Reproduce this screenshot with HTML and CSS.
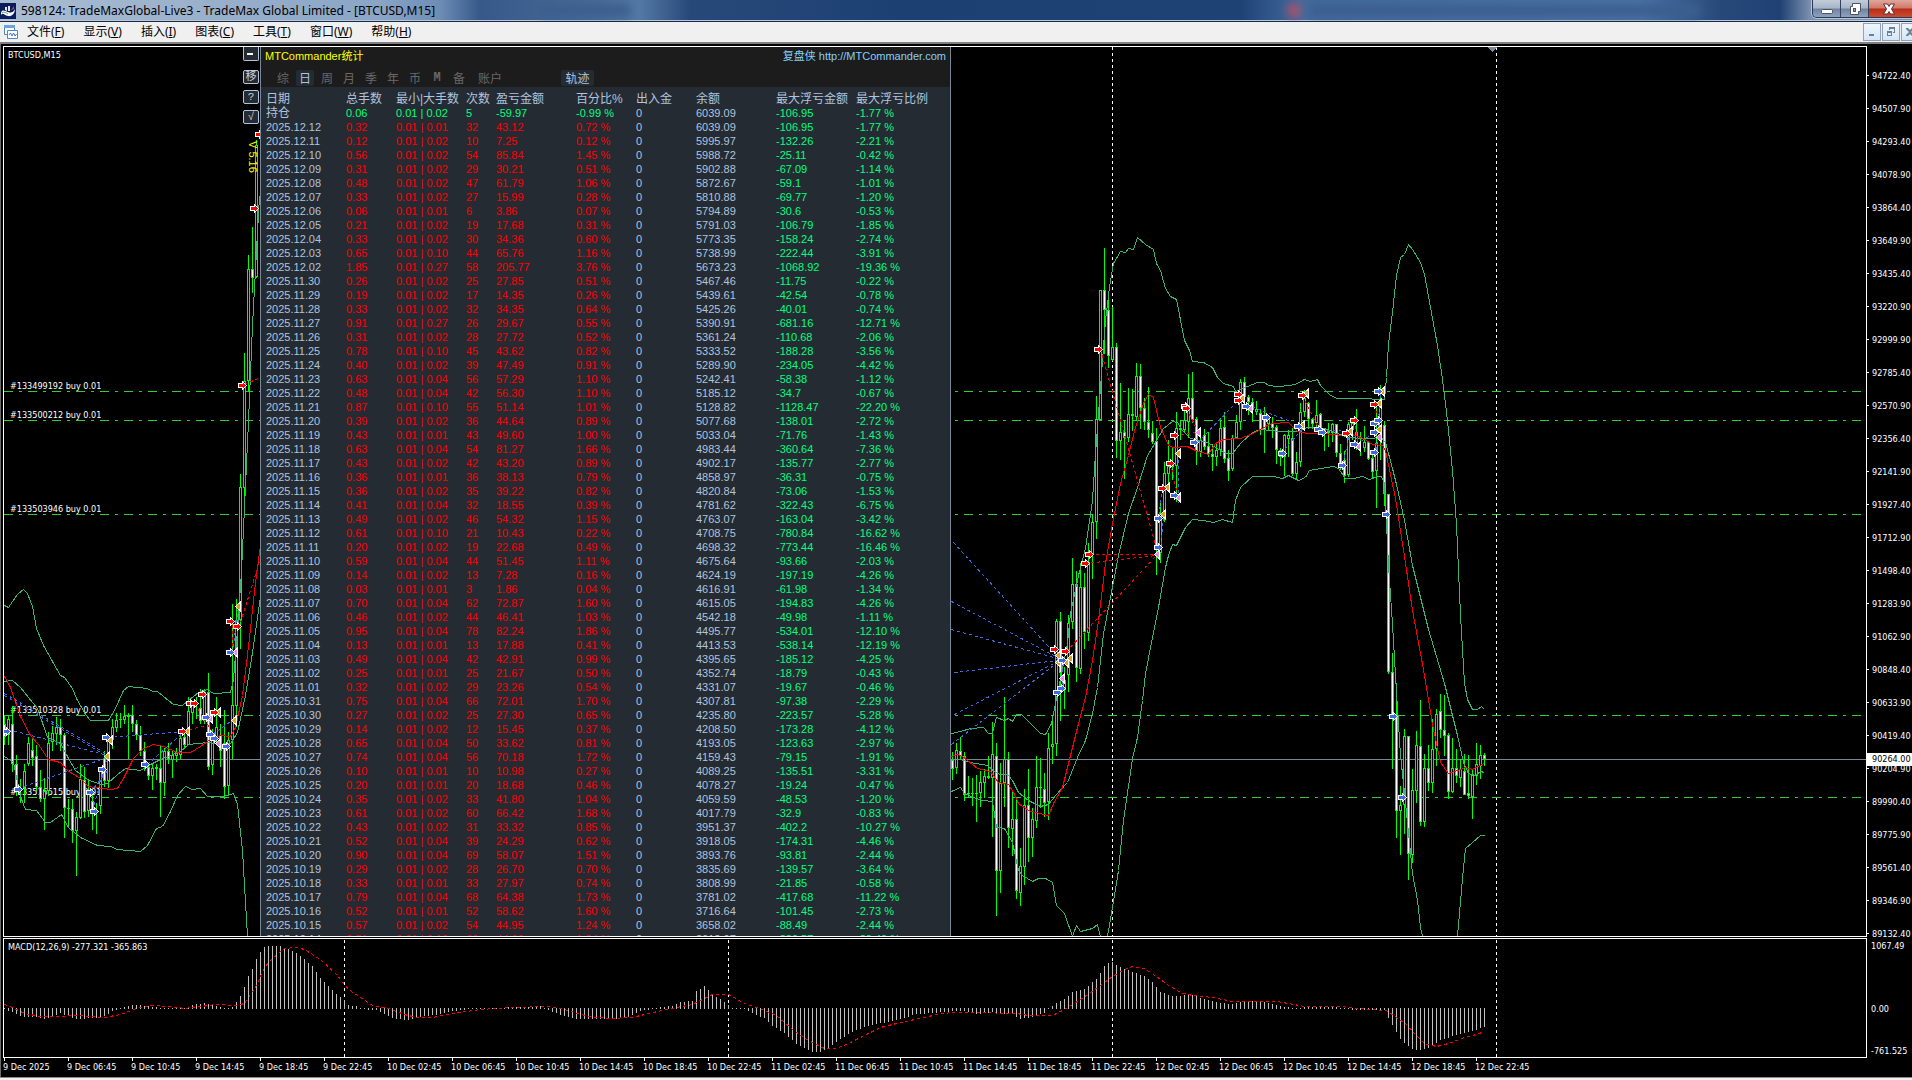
FILE: index.html
```html
<!DOCTYPE html>
<html lang="zh-CN">
<head>
<meta charset="utf-8">
<title>598124: TradeMaxGlobal-Live3 - TradeMax Global Limited - [BTCUSD,M15]</title>
<link rel="stylesheet" href="styles.css">
</head>
<body>
<div class="app">
  <header class="titlebar">
    <svg class="app-icon" width="16" height="16" viewBox="0 0 16 16" aria-hidden="true">
      <rect width="16" height="16" fill="#0b1c5c"/>
      <path d="M1 10C2 6 5 8 8 9S13 10 15 6C15 10 12 14 8 13S3 9 1 12z" fill="#fff"/>
      <path d="M5 7V4h2v4zM8 8V3h2v5z" fill="#dfe6f5"/>
      <path d="M11 7l3-4v3z" fill="#d33a3a"/>
      <path d="M2 10c2-2 4 0 6 1" stroke="#3fae5c" fill="none"/>
    </svg>
    <h1 class="title">598124: TradeMaxGlobal-Live3 - TradeMax Global Limited - [BTCUSD,M15]</h1>
    <div class="ghost ghost-left"></div>
    <div class="ghost ghost-right"></div>
    <div class="window-controls">
      <button class="wc" aria-label="最小化"><svg width="14" height="14" viewBox="0 0 14 14"><rect x="1.5" y="7.5" width="11" height="4" rx="1" fill="#fff" stroke="#4a5566"/></svg></button>
      <button class="wc" aria-label="还原"><svg width="14" height="14" viewBox="0 0 14 14"><path d="M4.500 1.500h8v8h-2v3h-8v-8h2z" fill="#fff" stroke="#4a5566"/><rect x="5.500" y="6.500" width="2" height="3" fill="#8b9bb0" stroke="#4a5566"/></svg></button>
      <button class="wc wc-close" aria-label="关闭"><svg width="14" height="14" viewBox="0 0 14 14"><path d="M1.500 2h4L7 4.500 8.500 2h4L9.500 7l3 5h-4L7 9.500 5.500 12h-4l3-5z" fill="#fff" stroke="#5a3038"/></svg></button>
    </div>
  </header>

  <nav class="menubar">
    <svg class="menu-icon" width="14" height="14" viewBox="0 0 14 14" aria-hidden="true">
      <path d="M.5.500h10v9H.5z" fill="#fff" stroke="#4d86c6"/><path d="M0 0h11v3H0z" fill="#6ba5dc"/>
      <path d="M3.500 5.500h10v8h-10z" fill="#fff" stroke="#4d86c6"/><path d="M5 10l1.500-2 1.500 3 1.500-3 1.500 3 1.500-2" stroke="#3d78bc" fill="none"/>
    </svg>
    <button class="menu">文件(<u>F</u>)</button>
    <button class="menu">显示(<u>V</u>)</button>
    <button class="menu">插入(<u>I</u>)</button>
    <button class="menu">图表(<u>C</u>)</button>
    <button class="menu">工具(<u>T</u>)</button>
    <button class="menu">窗口(<u>W</u>)</button>
    <button class="menu">帮助(<u>H</u>)</button>
    <div class="mdi-controls">
      <button class="mdi" aria-label="最小化图表"><svg width="10" height="10" viewBox="0 0 10 10"><path d="M2 7h5v2H2z"/></svg></button>
      <button class="mdi" aria-label="还原图表"><svg width="10" height="10" viewBox="0 0 10 10"><path d="M3 0h6v6H7V5h1V2H4v1H3zM1 4h5v5H1zM2 6v2h3V6z" fill-rule="evenodd"/></svg></button>
      <button class="mdi" aria-label="关闭图表"><svg width="10" height="10" viewBox="0 0 10 10"><path d="M1 1h2l2 2 2-2h2v1L6 5l3 3v1H7L5 7 3 9H1V8l3-3-3-3z"/></svg></button>
    </div>
  </nav>

  <main class="workspace">
    <section class="plot price-plot" aria-label="BTCUSD,M15">
      <svg class="canvas" id="price-canvas"><g id="price-layer" transform="translate(-4 -47)"></g></svg>
      <div class="plot-label">BTCUSD,M15</div>
      <div class="version">V 5.16</div>
      <div class="tools">
        <button class="tool tool-min" aria-label="收起"><span></span></button>
        <button class="tool">移</button>
        <button class="tool">?</button>
        <button class="tool">√</button>
      </div>
      <aside class="panel">
        <div class="panel-head">
          <div class="panel-title"><span>MTCommander统计</span><a href="http://MTCommander.com">复盘侠 http://MTCommander.com</a></div>
          <div class="tabs">
            <button class="tab">综</button><button class="tab on">日</button><button class="tab">周</button><button class="tab">月</button><button class="tab">季</button><button class="tab">年</button><button class="tab">币</button><button class="tab tab-m">M</button><button class="tab">备</button><button class="tab wide">账户</button><button class="tab on track">轨迹</button>
          </div>
        </div>
        <table class="stats">
          <colgroup><col class="w80"><col class="w50"><col class="w70"><col class="w30"><col class="w80"><col class="w60"><col class="w60"><col class="w80"><col class="w80"><col></colgroup>
          <thead><tr><th>日期</th><th>总手数</th><th>最小|大手数</th><th>次数</th><th>盈亏金额</th><th>百分比%</th><th>出入金</th><th>余额</th><th>最大浮亏金额</th><th>最大浮亏比例</th></tr></thead>
          <tbody id="stats-body"></tbody>
        </table>
      </aside>
    </section>
    <div class="axis price-axis">
      <ul class="prices" id="prices"></ul>
      <div class="price-tag">90264.00</div>
    </div>

    <section class="plot macd-plot" aria-label="MACD">
      <svg class="canvas"><g id="macd-layer" transform="translate(-4 -939)"></g></svg>
      <div class="plot-label">MACD(12,26,9) -277.321 -365.863</div>
    </section>
    <div class="axis macd-axis"><span>1067.49</span><span>0.00</span><span>-761.525</span></div>

    <ol class="times" id="times"></ol>
  </main>
</div>
<script src="chart.js"></script>
</body>
</html>
```
FILE: styles.css
```css
* { box-sizing: border-box; }
body { margin: 0; background: #000; color: #fff; font: 9px/12px "DejaVu Sans Condensed", "DejaVu Sans", sans-serif; }
button { border: 0; padding: 0; margin: 0; background: none; color: inherit; font: inherit; }
ul, ol { list-style: none; margin: 0; padding: 0; }

.app { display: flex; flex-direction: column; height: 100vh; overflow: hidden; border-bottom: 2px solid #f0f0f0; }

/* title bar */
.titlebar {
  position: relative; flex: none; display: flex; align-items: center; height: 22px; overflow: hidden;
  border-bottom: 1px solid #1b2a44; box-shadow: inset 0 -1px #b9c9dc;
  background: linear-gradient(90deg, #a9bcd2 0, #9db3cd 160px, #8aa5c6 380px, #6d8db5 440px, #36598a 480px, #4a6b98 600px, #5478a5 640px, #27497a 690px, #1d4072 900px, #1f4275 1240px, #426a9c 1300px, #4c73a4 1640px, #27497a 1720px, #1f4173 1780px, #7b8fae 1810px);
}
.app-icon { flex: none; }
.title { position: relative; z-index: 1; margin: 0 0 0 5px; color: #000; font: 12px/20px "Noto Sans", "Open Sans", sans-serif; white-space: nowrap; }
.ghost { position: absolute; top: 4px; height: 13px; filter: blur(4px); background: #3c5f8f; }
.ghost-left { left: 540px; width: 90px; }
.ghost-right { left: 1310px; width: 390px; }
.ghost-right::before { content: ""; display: block; width: 12px; height: 13px; margin-left: -22px; background: #b05068; }
.window-controls { position: relative; margin-left: auto; align-self: flex-start; display: flex; height: 18px; border: 1px solid #2b3950; border-top: 0; border-right: 0; border-radius: 0 0 0 5px; overflow: hidden; box-shadow: 0 0 0 1px #b7c5d8; }
.wc { display: grid; place-items: center; width: 28px; border-right: 1px solid #33435c; background: linear-gradient(#c3ccd9, #a7b4c6 48%, #6f83a0 52%, #8fa2bd); }
.wc-close { width: 43px; border-right: 0; padding-right: 4px; background: linear-gradient(#e0a79c, #d07868 48%, #b62d17 52%, #cc4a30); }

/* menu bar */
.menubar { flex: none; display: flex; align-items: center; height: 22px; padding-left: 4px; background: #f0f0f0; border-bottom: 2px solid #7f7f7f; color: #000; }
.menu { padding: 0 9px; margin-right: 1px; font: 12px/20px "Noto Sans", "Noto Sans CJK SC", sans-serif; }
.mdi-controls { display: flex; gap: 1px; margin-left: auto; margin-right: -7px; }
.mdi { display: grid; place-items: center; width: 18px; height: 18px; border: 1px solid #8fa3ba; background: linear-gradient(#eef5fc, #d5e6f7); }
.mdi svg { fill: #6d7f94; }

/* chart window */
.workspace {
  flex: 1; min-height: 0; display: grid; grid-template-columns: minmax(0, 1fr) 45px; grid-template-rows: minmax(0, 1fr) 120px 18px; row-gap: 1px;
  padding: 2px 0 0 3px; border-bottom: 1px solid #8a8a8a; box-shadow: inset 1px 0 #6a6a6a;
}
.plot { position: relative; border: 1px solid #fff; overflow: hidden; }
.canvas { position: absolute; inset: 0; width: 100%; height: 100%; shape-rendering: crispEdges; }
.canvas text { fill: #fff; font-size: 9px; }
.plot-label { position: absolute; left: 4px; top: 2px; white-space: nowrap; font-size: 9px; }
.version { position: absolute; left: 242px; top: 94px; writing-mode: vertical-rl; color: #ff0; font: 11px/14px "Liberation Sans", Arial, sans-serif; }

.tools { position: absolute; left: 239px; top: 0; display: flex; flex-direction: column; gap: 6px; }
.tool { width: 16px; height: 14px; border: 1px solid #b0c4de; border-radius: 2px; background: #252b33; color: #c8d2de; font: 11px/12px "Liberation Mono", "Noto Sans CJK SC", monospace; }
.tool-min { margin-bottom: 3px; border-top: 0; border-radius: 0 0 2px 2px; }
.tool-min span { display: block; width: 6px; height: 2px; margin: 0 3px; background: #fff; }

/* statistics panel */
.panel { position: absolute; left: 256px; top: 0; bottom: 0; width: 691px; overflow: hidden; border: solid #778899; border-width: 0 1px; background: #252b33; color: #b0c4de; font: 11px/14px "Liberation Sans", Arial, "Noto Sans CJK SC", sans-serif; }
.panel-head { height: 40px; background: #1c1c1c; }
.panel-title { display: flex; justify-content: space-between; padding: 1px 4px 6px 4px; line-height: 16px; color: #ff0; }
.panel-title a { color: #87cefa; text-decoration: none; }
.tabs { display: flex; gap: 4px; padding-left: 13px; }
.tab { width: 18px; height: 16px; border-radius: 2px; color: #696969; font: 12px/16px "Noto Sans CJK SC", sans-serif; }
.tab-m { font-family: "Liberation Mono", monospace; font-weight: bold; }
.wide { width: 36px; }
.on { background: #252b33; color: #b0c4de; }
.track { width: 33px; margin-left: 49px; }
.stats { width: 100%; margin-top: 5px; table-layout: fixed; border-collapse: collapse; white-space: nowrap; }
.stats th, .stats td { height: 14px; padding: 0 0 0 5px; text-align: left; font-weight: normal; line-height: 14px; }
.stats th, .stats .cjk { font-size: 12px; }
.w30 { width: 30px; }
.w50 { width: 50px; }
.w60 { width: 60px; }
.w70 { width: 70px; }
.w80 { width: 80px; }
.loss { color: #00ff7f; }
.gain { color: #f00; }

/* axes */
.axis { position: relative; min-height: 0; }
.prices { padding-top: 13px; }
.prices li { display: flex; align-items: center; height: 33px; gap: 3px; }
.prices li::before { content: ""; width: 2px; height: 1px; background: #fff; }
.price-tag { position: absolute; left: 0; right: 0; top: 707px; height: 13px; padding-left: 5px; background: #fff; color: #000; line-height: 13px; }
.macd-axis { display: grid; grid-template-rows: 63px 42px 1fr; padding: 2px 0 0 4px; white-space: nowrap; }
.times { grid-column: 1 / -1; display: flex; }
.times li { flex: 0 0 64px; padding-top: 2px; white-space: nowrap; }
.times li::before { content: ""; display: block; width: 1px; height: 3px; margin: -3px 0 0 1px; background: #fff; }
```
FILE: chart.js
```js
const px = (tag, attrs) => '<' + tag + ' ' + Object.entries(attrs).map(([k, v]) => k + '="' + v + '"').join(' ') + '/>';

/* daily statistics: date, lots, max lot, count, profit, percent, balance, max drawdown, drawdown percent */
const stats = `12.12 0.32 01 32 43.12 0.72 6039.09 106.95 1.77
12.11 0.12 02 10 7.25 0.12 5995.97 132.26 2.21
12.10 0.56 02 54 85.84 1.45 5988.72 25.11 0.42
12.09 0.31 02 29 30.21 0.51 5902.88 67.09 1.14
12.08 0.48 02 47 61.79 1.06 5872.67 59.1 1.01
12.07 0.33 02 27 15.99 0.28 5810.88 69.77 1.20
12.06 0.06 01 6 3.86 0.07 5794.89 30.6 0.53
12.05 0.21 02 19 17.68 0.31 5791.03 106.79 1.85
12.04 0.33 02 30 34.36 0.60 5773.35 158.24 2.74
12.03 0.65 10 44 65.76 1.16 5738.99 222.44 3.91
12.02 1.85 27 58 205.77 3.76 5673.23 1068.92 19.36
11.30 0.26 02 25 27.85 0.51 5467.46 11.75 0.22
11.29 0.19 02 17 14.35 0.26 5439.61 42.54 0.78
11.28 0.33 02 32 34.35 0.64 5425.26 40.01 0.74
11.27 0.91 27 26 29.67 0.55 5390.91 681.16 12.71
11.26 0.31 02 28 27.72 0.52 5361.24 110.68 2.06
11.25 0.78 10 45 43.62 0.82 5333.52 188.28 3.56
11.24 0.40 02 39 47.49 0.91 5289.90 234.05 4.42
11.23 0.63 04 56 57.29 1.10 5242.41 58.38 1.12
11.22 0.48 04 42 56.30 1.10 5185.12 34.7 0.67
11.21 0.87 10 55 51.14 1.01 5128.82 1128.47 22.20
11.20 0.39 02 36 44.64 0.89 5077.68 138.01 2.72
11.19 0.43 01 43 49.60 1.00 5033.04 71.76 1.43
11.18 0.63 04 54 81.27 1.66 4983.44 360.64 7.36
11.17 0.43 02 42 43.20 0.89 4902.17 135.77 2.77
11.16 0.36 01 36 38.13 0.79 4858.97 36.31 0.75
11.15 0.36 02 35 39.22 0.82 4820.84 73.06 1.53
11.14 0.41 04 32 18.55 0.39 4781.62 322.43 6.75
11.13 0.49 02 46 54.32 1.15 4763.07 163.04 3.42
11.12 0.61 10 21 10.43 0.22 4708.75 780.84 16.62
11.11 0.20 02 19 22.68 0.49 4698.32 773.44 16.46
11.10 0.59 04 44 51.45 1.11 4675.64 93.66 2.03
11.09 0.14 02 13 7.28 0.16 4624.19 197.19 4.26
11.08 0.03 01 3 1.86 0.04 4616.91 61.98 1.34
11.07 0.70 04 62 72.87 1.60 4615.05 194.83 4.26
11.06 0.46 02 44 46.41 1.03 4542.18 49.98 1.11
11.05 0.95 04 78 82.24 1.86 4495.77 534.01 12.10
11.04 0.13 01 13 17.88 0.41 4413.53 538.14 12.19
11.03 0.49 04 42 42.91 0.99 4395.65 185.12 4.25
11.02 0.25 01 25 21.67 0.50 4352.74 18.79 0.43
11.01 0.32 02 29 23.26 0.54 4331.07 19.67 0.46
10.31 0.75 04 66 72.01 1.70 4307.81 97.38 2.29
10.30 0.27 02 25 27.30 0.65 4235.80 223.57 5.28
10.29 0.14 02 12 15.45 0.37 4208.50 173.28 4.12
10.28 0.65 04 50 33.62 0.81 4193.05 123.63 2.97
10.27 0.74 04 56 70.18 1.72 4159.43 79.15 1.91
10.26 0.10 01 10 10.98 0.27 4089.25 135.51 3.31
10.25 0.20 01 20 18.68 0.46 4078.27 19.24 0.47
10.24 0.35 02 33 41.80 1.04 4059.59 48.53 1.20
10.23 0.61 02 60 66.42 1.68 4017.79 32.9 0.83
10.22 0.43 02 31 33.32 0.85 3951.37 402.2 10.27
10.21 0.52 04 39 24.29 0.62 3918.05 174.31 4.46
10.20 0.90 04 69 58.07 1.51 3893.76 93.81 2.44
10.19 0.29 02 28 26.70 0.70 3835.69 139.57 3.64
10.18 0.33 01 33 27.97 0.74 3808.99 21.85 0.58
10.17 0.79 04 68 64.38 1.73 3781.02 417.68 11.22
10.16 0.52 01 52 58.62 1.60 3716.64 101.45 2.73
10.15 0.57 02 54 44.95 1.24 3658.02 88.49 2.44
10.14 0.51 10 60 44.60 1.24 3613.07 330.57 20.40`;

const row = (date, lots, max, n, profit, pct, bal, dd, ddPct, cls, dateCls) =>
  `<tr><td class="${dateCls}">${date}</td><td class="${cls}">${lots}</td><td class="${cls}">0.01 | 0.${max}</td><td class="${cls}">${n}</td>` +
  `<td class="${cls}">${profit}</td><td class="${cls}">${pct} %</td><td>0</td><td>${bal}</td><td class="loss">-${dd}</td><td class="loss">-${ddPct} %</td></tr>`;
document.getElementById('stats-body').innerHTML =
  row('持仓', '0.06', '02', 5, '-59.97', '-0.99', '6039.09', '106.95', '1.77', 'loss', 'cjk') +
  stats.split('\n').map(l => { const c = l.split(' '); return row('2025.' + c[0], ...c.slice(1), 'gain', ''); }).join('');

/* axes */
document.getElementById('prices').innerHTML =
  '94722.40 94507.90 94293.40 94078.90 93864.40 93649.90 93435.40 93220.90 92999.90 92785.40 92570.90 92356.40 92141.90 91927.40 91712.90 91498.40 91283.90 91062.90 90848.40 90633.90 90419.40 90204.90 89990.40 89775.90 89561.40 89346.90 89132.40'
    .split(' ').map(p => `<li>${p}</li>`).join('');
const hours = ['02:45', '06:45', '10:45', '14:45', '18:45', '22:45'];
const times = ['9 Dec 2025'];
for (let i = 1; i < 24; i++) times.push(`${9 + Math.floor(i / 6)} Dec ${hours[i % 6]}`);
document.getElementById('times').innerHTML = times.map(t => `<li>${t}</li>`).join('');

/* candles: high, low, body top, body bottom, direction (u hollow, d filled); one every 4px */
const leftBars = `716 745 724 737 d,716 745 719 735 u,706 772 724 764 d,755 796 764 788 d,779 803 788 791 u,764 803 771 788 u,737 766 743 764 u,739 766 750 758 d,745 791 756 787 d,770 802 787 799 d,778 830 791 799 u,732 796 743 791 u,726 751 733 742 u,717 745 727 734 u,719 751 727 735 d,733 838 735 808 d,799 826 808 809 u,799 843 809 831 d,812 876 817 831 u,764 819 779 818 u,767 818 780 812 d,779 817 794 811 u,791 830 801 812 d,803 834 811 812 u,767 814 770 806 u,751 787 758 781 d,737 788 737 781 u,719 749 727 740 u,713 732 720 728 u,713 728 719 720 u,705 724 716 720 u,713 759 716 717 u,705 732 715 724 d,720 740 724 735 d,726 756 735 751 d,742 771 751 765 d,764 780 767 776 d,763 790 768 776 u,764 780 767 769 u,745 817 768 783 d,748 796 751 783 u,743 764 751 759 d,751 778 755 760 u,748 762 752 756 u,732 759 738 755 u,732 748 737 745 d,697 745 711 745 u,703 724 705 713 u,697 719 703 705 u,689 724 708 721 d,689 724 692 721 u,673 770 692 767 d,729 775 735 765 u,697 743 727 737 u,724 767 735 751 d,710 799 743 787 d,732 796 740 786 u,604 759 705 740 u,599 727 620 706 u,474 649 487 620 u,353 496 381 488 u,255 392 269 381 u,227 293 269 278 d,140 278 145 277 u`;
const rightBars = `752 780 760 769 d,743 774 750 768 u,737 759 751 756 d,752 801 756 795 d,776 797 793 794 u,778 806 793 794 u,775 822 793 794 u,771 807 782 793 u,769 798 776 783 u,756 779 776 778 u,722 837 754 778 u,743 916 756 871 d,763 893 783 871 u,697 807 759 783 u,752 848 759 828 d,790 856 819 829 u,798 899 819 891 d,848 906 866 893 u,789 885 805 867 u,769 862 805 838 d,808 857 819 838 u,756 828 787 821 u,758 808 787 788 u,773 817 789 803 d,733 820 748 802 u,715 764 744 747 u,619 756 621 744 u,612 721 621 673 d,667 709 680 690 u,615 692 623 675 u,558 629 584 622 u,571 682 584 668 d,563 674 587 669 u,573 649 587 632 d,543 641 562 633 u,514 579 522 554 u,396 539 419 522 u,290 420 290 420 u,248 354 290 310 d,297 368 310 356 d,307 361 347 360 u,343 458 347 441 d,383 460 432 441 u,420 479 432 438 d,388 442 414 438 u,389 431 414 416 u,363 421 376 417 u,364 429 376 408 d,398 430 408 422 d,387 438 422 430 d,421 444 433 442 d,428 575 441 548 d,503 563 513 553 u,462 522 473 513 u,440 488 466 474 u,448 480 463 467 u,412 502 428 466 u,420 440 428 430 u,408 433 420 430 u,374 438 398 422 u,372 423 398 420 d,417 465 419 451 d,427 457 440 452 u,429 450 435 447 d,432 457 446 454 d,444 471 454 457 d,444 466 450 457 u,418 456 428 450 u,412 463 427 459 d,450 481 458 471 d,435 471 438 469 u,415 439 422 438 u,379 430 382 422 u,377 402 382 397 d,395 415 397 402 d,398 422 402 410 d,401 415 409 412 u,410 435 413 430 d,407 453 415 430 d,415 430 419 424 u,417 438 423 428 d,425 464 427 450 d,448 466 450 457 d,434 476 435 457 u,430 457 435 439 u,428 476 438 474 d,452 480 462 474 u,403 467 412 462 u,390 417 398 412 u,402 429 403 419 d,418 429 419 424 d,400 427 415 423 u,413 435 414 428 d,428 451 428 432 d,423 447 431 433 u,423 442 424 433 u,424 457 424 453 d,444 470 453 464 d,451 483 460 476 d,422 477 424 475 u,420 440 423 430 u,409 450 432 443 u,432 456 437 439 u,426 452 442 448 u,442 460 442 459 d,453 478 458 472 d,402 508 443 471 u,385 460 405 430 u,421 506 425 494 d,494 674 494 672 d,653 769 672 716 d,683 838 716 811 d,786 855 805 811 u,729 834 736 805 u,736 880 736 854 d,769 863 790 855 u,731 803 745 791 u,700 826 746 822 d,754 827 768 822 u,745 791 768 783 d,719 793 749 783 u,709 766 714 749 u,694 738 711 730 d,695 756 730 736 d,733 799 735 792 d,738 793 768 792 u,749 783 768 776 d,759 787 769 778 u,754 795 771 795 d,755 799 793 796 d,769 819 775 797 u,743 785 764 776 u,745 779 755 766 u,753 766 755 759 d`;
const candles = (src, x0) => src.split(',').map((s, i) => {
  const [h, l, t, b, dir] = s.split(' ');
  const x = x0 + i * 4;
  let out = px('rect', { x, y: h, width: 1, height: l - h, fill: '#0f0' }) + px('rect', { x: x - 1, y: t, width: 3, height: Math.max(b - t, 1), fill: '#0f0' });
  if (b - t > 2) out += px('rect', { x, y: +t + 1, width: 1, height: b - t - 2, fill: dir === 'u' ? '#000' : '#fff' });
  return out;
}).join('');

/* indicator curves */
const bands = [
  '4,605 8,607 12,601 17,594 23,589 27,593 32,606 36,628 43,645 52,661 60,675 64,677 72,688 76,698 85,714 90,720 108,720 115,708 123,690 128,686 147,688 152,691 157,691 163,696 173,704 182,705 188,700 198,692 207,689 213,693 230,692 233,679 237,630 241,571 244,507 248,421 252,325 256,250 259,196',
  '4,681 12,680 20,687 28,697 37,708 47,737 60,743 67,756 75,770 87,779 100,784 107,783 117,774 125,768 140,770 150,764 160,759 180,751 188,744 207,742 223,744 230,743 237,732 245,695 252,652 260,596',
  '4,756 13,762 20,796 25,809 36,810 45,822 50,822 61,814 68,827 80,837 97,845 110,846 117,849 140,851 147,845 156,828 162,826 170,811 177,795 185,786 192,789 200,788 207,796 223,796 233,793 237,804 242,850 247,936',
  '951,733 960,731 970,728 983,727 988,733 992,733 996,717 1004,720 1008,718 1012,721 1016,714 1021,714 1040,733 1045,734 1051,723 1055,703 1067,643 1070,613 1078,575 1085,548 1092,500 1095,453 1100,387 1105,320 1109,287 1113,263 1120,251 1125,252 1128,248 1133,249 1137,237 1145,244 1153,249 1156,263 1160,270 1165,288 1170,296 1176,299 1184,340 1189,350 1192,361 1203,362 1212,367 1217,377 1223,383 1233,386 1235,391 1247,386 1257,382 1264,382 1268,385 1277,386 1290,385 1297,383 1304,379 1310,381 1317,379 1320,385 1330,395 1337,398 1363,398 1380,399 1384,399 1386,377 1388,343 1392,312 1396,275 1400,257 1404,254 1408,244 1412,249 1420,262 1424,274 1430,307 1437,345 1442,379 1447,420 1452,470 1456,524 1460,615 1464,683 1467,699 1472,709 1477,709 1481,706 1484,709',
  '951,759 960,759 970,762 987,765 995,772 1000,774 1007,774 1012,780 1018,792 1028,800 1040,806 1048,804 1055,795 1067,782 1077,757 1085,740 1092,713 1097,687 1103,633 1110,597 1118,555 1128,513 1137,487 1147,455 1155,442 1163,428 1172,421 1177,422 1182,430 1190,438 1207,442 1217,448 1225,453 1232,453 1240,443 1252,432 1260,429 1280,431 1297,431 1307,427 1323,428 1343,435 1347,437 1363,438 1373,438 1380,436 1385,442 1392,468 1396,484 1404,520 1412,565 1428,629 1444,683 1457,735 1463,762 1468,773 1475,775 1480,771 1484,772',
  '951,791 960,787 964,793 973,797 982,800 992,801 996,827 1004,828 1012,842 1018,870 1022,875 1032,881 1038,878 1045,878 1052,882 1056,905 1064,913 1072,936 1076,925 1080,931 1092,928 1097,924 1100,936',
  '1107,936 1112,907 1118,870 1123,820 1132,758 1137,737 1142,700 1145,673 1152,637 1158,607 1165,567 1168,555 1172,544 1176,545 1185,527 1192,519 1203,520 1213,522 1222,519 1232,522 1235,500 1240,487 1252,476 1273,476 1282,478 1288,475 1298,480 1305,477 1309,470 1320,468 1333,466 1338,468 1345,478 1353,478 1362,476 1369,479 1377,476 1381,476 1384,483 1385,502 1388,565 1392,624 1396,692 1400,755 1404,792 1408,832 1412,873 1417,900 1420,927 1422,936',
  '1457,936 1462,878 1465,848 1472,842 1480,835 1484,835'
];
const averages = [
  '4,676 10,687 20,716 30,735 38,744 48,759 60,762 67,770 80,778 88,786 95,787 110,789 117,788 123,778 133,758 143,748 153,744 163,746 177,752 190,752 200,746 210,739 220,735 230,736 235,727 242,695 248,646 255,582 260,545',
  '951,756 957,754 962,756 967,760 977,768 990,771 998,782 1008,784 1013,792 1018,803 1028,810 1043,814 1048,815 1053,803 1062,787 1068,763 1077,727 1085,697 1092,660 1098,620 1105,563 1112,523 1120,483 1128,455 1135,427 1143,403 1148,394 1153,397 1160,427 1168,445 1173,447 1187,446 1195,450 1208,454 1215,443 1223,439 1240,438 1253,433 1267,425 1272,423 1288,422 1297,431 1307,433 1323,433 1342,435 1347,433 1355,435 1363,438 1372,444 1382,445 1385,450 1395,498 1404,556 1412,610 1423,669 1432,724 1440,762 1448,773 1460,769 1465,767 1472,769 1477,766 1484,763'
];
const curve = (points, stroke, dash) => px('polyline', { points, stroke, fill: 'none', 'stroke-dasharray': dash || 'none', transform: 'translate(.5 .5)' });

/* trade tracks and markers */
const sells = '1100,349 1158,555|1089,554 1156,554|1085,563 1156,555|1066,651 1156,555|1170,463 1176,490|1175,435 1196,432|1186,408 1198,432|244,384 260,377|240,622 260,558|232,624 232,652|194,703 217,740|183,731 205,725|1238,396 1250,408|1302,395 1318,428|1354,420 1358,446|1376,404 1378,436';
const buys = '953,542 1057,656|951,601 1057,657|951,629 1057,658|954,672 1057,660|954,714 1057,661|951,744 1057,662|1062,662 1062,690|1178,453 1178,502|1163,517 1160,550|1162,488 1158,518|1197,442 1240,398|1246,404 1290,421|1284,449 1303,427|1320,430 1340,430|1342,463 1350,432|1356,444 1374,432|1376,450 1380,392|4,693 107,754|4,695 107,756|8,729 107,755|18,788 104,758|92,810 107,756|90,792 107,770|108,737 183,731|147,764 183,732|212,734 233,719|232,652 238,606';
const arrows = {
  '#f00': '259,134 254,208 242,385 230,621 237,626 202,694 190,703 194,703 182,731 214,712 1089,554 1085,563 1054,649 1065,651 1098,349 1185,406 1186,408 1174,435 1170,463 1162,488 1238,394 1238,400 1302,395 1354,420 1346,433 1374,404',
  '#4169e1': '6,731 18,789 106,737 102,769 90,792 94,811 145,764 206,717 210,734 214,738 226,746 230,652 1062,660 1057,692 1061,688 1174,495 1158,518 1158,547 1194,442 1246,406 1266,417 1282,453 1298,426 1318,429 1322,432 1342,465 1354,444 1374,423 1378,420 1374,432 1374,452 1378,391 1386,514 1393,716 1402,797'
};
const exits = {
  '#daa520': '110,740 107,756 187,731 218,712 238,606 234,720 1058,655 1058,662 1066,662 1070,658 1167,487 1178,453 1163,514 1242,398 1306,393 1302,425 1350,431 1382,391 1379,403 1379,429',
  '#ee82ee': '210,718 218,743 235,652 1062,678 1157,554 1178,497 1198,432 1250,408 1358,446 1379,437'
};
const marks = (set, d) => Object.entries(set).map(([fill, list]) => list.split(' ').map(p => px('path', { d, fill, stroke: '#fff', transform: `translate(${p})` })).join('')).join('');

const orders = [[391, '#133499192'], [420, '#133500212'], [514, '#133503946'], [715, '#133510328'], [797, '#133516515']];
const vline = (x, y1, y2) => px('path', { d: `M${x}.5 ${y1}V${y2}`, stroke: '#fff', 'stroke-dasharray': '3 3' });

document.getElementById('price-layer').innerHTML =
  vline(1112, 47, 936) + vline(1496, 47, 936) +
  orders.map(([y, id]) => px('path', { d: `M4 ${y}.5H1866`, stroke: '#32cd32', 'stroke-dasharray': '9 6 3 6' }) + `<text x="10" y="${y - 2}">${id} buy 0.01</text>`).join('') +
  px('path', { d: 'M4 759.5H1866', stroke: '#778899' }) +
  candles(leftBars, 4) + candles(rightBars, 952) +
  bands.map(p => curve(p, '#3cb371')).join('') + averages.map(p => curve(p, '#f00')).join('') +
  sells.split('|').map(p => curve(p, '#f00', '3 3')).join('') + buys.split('|').map(p => curve(p, '#4169e1', '3 3')).join('') +
  marks(exits, 'M2.500 -4V5L-2.500 .500z') + marks(arrows, 'M-3.500 -1.500H0V-4L4.500 .500L0 5V2.500H-3.500z') +
  px('path', { d: 'M1488 47H1497L1492.500 52z', fill: '#778899' });

/* MACD histogram and signal */
const macd = '4,1008 16,1013 24,1016 36,1016 44,1018 52,1015 60,1012 68,1015 76,1018 96,1017 104,1015 112,1010 118,1008 124,1007 132,1005 140,1005 152,1007 164,1008 188,1008 192,1005 204,1003 212,1005 224,1008 232,1007 240,996 244,987 248,976 252,969 256,959 260,952 264,947 268,946 280,946 288,949 296,953 304,959 312,966 320,978 328,986 336,994 344,1000 348,1005 356,1006 360,1008 376,1009 388,1015 396,1018 408,1019 424,1015 440,1013 452,1010 468,1008 500,1008 512,1007 532,1007 540,1006 548,1009 560,1014 576,1018 612,1018 628,1016 640,1010 652,1008 672,1006 680,1002 692,1001 696,991 704,986 712,994 724,1002 732,1008 744,1008 756,1014 764,1017 772,1025 784,1032 796,1043 808,1049 812,1051 820,1051 828,1047 840,1038 852,1031 864,1026 876,1023 892,1020 904,1017 916,1013 932,1012 956,1010 964,1010 976,1013 992,1011 1004,1013 1012,1013 1020,1018 1032,1016 1044,1012 1048,1008 1056,1003 1064,999 1072,992 1084,989 1096,979 1104,966 1108,963 1112,962 1120,967 1136,973 1144,976 1152,982 1160,992 1172,996 1192,995 1204,999 1220,1003 1232,1004 1244,1001 1260,1001 1272,1004 1284,1007 1296,1008 1308,1007 1332,1007 1344,1008 1360,1009 1384,1009 1388,1017 1392,1024 1400,1038 1408,1045 1412,1048 1420,1049 1430,1047 1440,1039 1456,1034 1470,1031 1484,1026'.split(' ').map(p => p.split(',').map(Number));
const signal = '4,1004 12,1007 24,1013 40,1016 56,1016 76,1015 104,1017 120,1014 136,1008 152,1005 168,1006 184,1008 200,1006 216,1004 236,1005 244,1003 256,985 264,967 272,958 284,948 296,947 304,949 320,959 336,974 348,989 360,997 372,1005 388,1008 404,1014 416,1017 432,1017 452,1013 480,1009 512,1007 548,1006 564,1009 588,1016 608,1018 632,1017 648,1013 676,1007 692,1004 704,998 712,994 728,994 744,1003 756,1007 764,1010 776,1015 792,1029 808,1040 824,1048 836,1048 848,1043 860,1037 880,1027 900,1022 924,1017 940,1013 956,1012 990,1012 1000,1013 1016,1013 1028,1015 1052,1015 1064,1009 1080,999 1100,985 1112,976 1124,969 1132,966 1144,968 1156,976 1168,985 1180,992 1192,995 1212,997 1232,1001 1276,1001 1288,1003 1304,1006 1340,1006 1356,1008 1386,1010 1396,1017 1406,1024 1416,1035 1424,1043 1436,1046 1448,1043 1464,1037 1476,1034 1484,1031';
let bars = '';
for (let x = 4, k = 0; x <= 1484; x += 4) {
  while (macd[k + 1][0] < x) k++;
  const [[x1, y1], [x2, y2]] = [macd[k], macd[k + 1]];
  const y = Math.round(y1 + (y2 - y1) * (x - x1) / (x2 - x1));
  bars += px('rect', { x, y: Math.min(y, 1008), width: 1, height: Math.abs(y - 1008) + 1, fill: '#c0c0c0' });
}
document.getElementById('macd-layer').innerHTML =
  [344, 728, 1112, 1496].map(x => vline(x, 940, 1057)).join('') + bars + curve(signal, '#f00', '3 3');
```
